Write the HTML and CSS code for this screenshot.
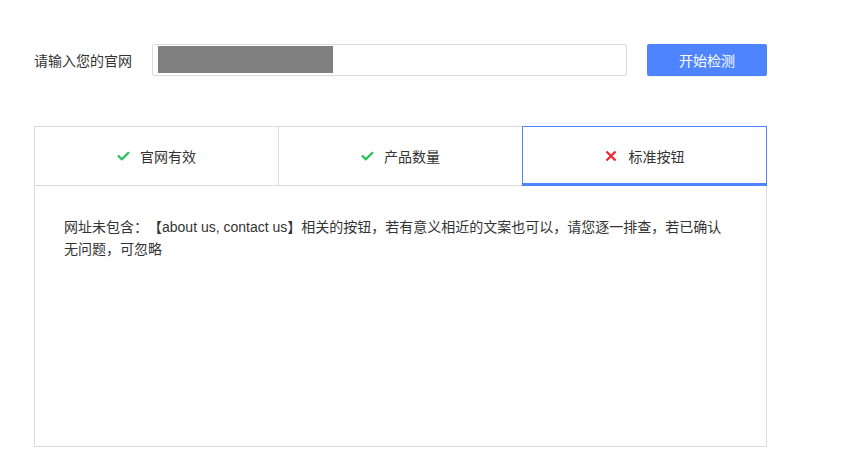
FILE: index.html
```html
<!DOCTYPE html>
<html lang="zh-CN">
<head>
<meta charset="utf-8">
<title>官网检测</title>
<link rel="stylesheet" href="styles.css">
</head>
<body>
<div class="page">
  <div class="search-row">
    <label class="label">请输入您的官网</label>
    <div class="input"><span class="redacted"></span></div>
    <button class="btn">开始检测</button>
  </div>
  <div class="panel">
    <div class="tabs">
      <div class="tab">
        <svg class="icon" width="13" height="12" viewBox="0 0 13 12"><polyline points="1,5.5 4.8,9.3 12,2.2" fill="none" stroke="#1fbf56" stroke-width="2.2"/></svg>
        <span>官网有效</span>
      </div>
      <div class="tab">
        <svg class="icon" width="13" height="12" viewBox="0 0 13 12"><polyline points="1,5.5 4.8,9.3 12,2.2" fill="none" stroke="#1fbf56" stroke-width="2.2"/></svg>
        <span>产品数量</span>
      </div>
      <div class="tab active">
        <svg class="icon" width="12" height="12" viewBox="0 0 12 12"><path d="M1.5 1.5 L10.5 10.5 M10.5 1.5 L1.5 10.5" fill="none" stroke="#f5222d" stroke-width="2.2"/></svg>
        <span>标准按钮</span>
      </div>
    </div>
    <div class="content">网址未包含：【about us, contact us】相关的按钮，若有意义相近的文案也可以，请您逐一排查，若已确认无问题，可忽略</div>
  </div>
</div>
</body>
</html>
```

FILE: styles.css
```css
html, body {
  margin: 0;
  padding: 0;
  background: #fff;
}
body {
  font-family: "Liberation Sans", "Noto Sans CJK SC", sans-serif;
  color: #333;
  font-size: 14px;
  text-spacing-trim: space-all;
}
.page {
  padding: 44px 0 0 34px;
  width: 733px;
}
.search-row {
  display: flex;
  align-items: center;
  height: 32px;
}
.label {
  width: 118px;
  font-size: 14px;
  color: #333;
}
.input {
  box-sizing: border-box;
  width: 475px;
  height: 32px;
  border: 1px solid #dcdcdc;
  border-radius: 2px;
  padding: 1px 5px;
}
.redacted {
  display: block;
  width: 175px;
  height: 27px;
  background: #808080;
}
.btn {
  box-sizing: border-box;
  margin-left: 20px;
  width: 120px;
  height: 32px;
  border: none;
  border-radius: 2px;
  background: #4e85fe;
  color: #fff;
  font-family: "Liberation Sans", "Noto Sans CJK SC", sans-serif;
  font-size: 14px;
  box-shadow: 0 1px 1px rgba(0,0,0,0.06);
  padding: 0;
}
.panel {
  margin-top: 50px;
  box-sizing: border-box;
  width: 733px;
  height: 321px;
  border: 1px solid #dcdcdc;
  display: flex;
  flex-direction: column;
}
.tabs {
  display: flex;
  height: 59px;
  box-sizing: border-box;
  border-bottom: 1px solid #dcdcdc;
}
.tab {
  flex: 1;
  display: flex;
  align-items: center;
  justify-content: center;
  gap: 10px;
  font-size: 14px;
  color: #333;
  border-right: 1px solid #dcdcdc;
  position: relative;
}
.tab:last-child {
  border-right: none;
}
.tab.active {
  gap: 12px;
}
.tab.active::after {
  content: "";
  position: absolute;
  top: -1px;
  left: -1px;
  right: -1px;
  bottom: -1px;
  border: 1px solid #4e85fe;
  border-bottom: 3px solid #4e85fe;
}
.icon {
  display: block;
}
.content {
  padding: 30px 36px 0 29px;
  line-height: 22px;
  font-size: 14px;
  color: #333;
}
```
